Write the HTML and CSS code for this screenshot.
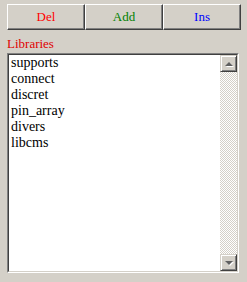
FILE: index.html
```html
<!DOCTYPE html>
<html>
<head>
<meta charset="utf-8">
<link rel="stylesheet" href="styles.css">
</head>
<body>
<div class="panel">
  <div class="buttons">
    <button class="btn del">Del</button>
    <button class="btn add">Add</button>
    <button class="btn ins">Ins</button>
  </div>
  <div class="label">Libraries</div>
  <div class="listbox">
    <ul class="items">
      <li>supports</li>
      <li>connect</li>
      <li>discret</li>
      <li>pin_array</li>
      <li>divers</li>
      <li>libcms</li>
    </ul>
    <div class="scrollbar">
      <div class="sbtn"><span class="arrow up"></span></div>
      <div class="track"></div>
      <div class="sbtn"><span class="arrow down"></span></div>
    </div>
  </div>
</div>
</body>
</html>
```
FILE: styles.css
```css
html, body {
  margin: 0;
  padding: 0;
  background: #d4d0c8;
}
body {
  width: 247px;
  height: 282px;
  overflow: hidden;
  font-family: "Liberation Serif", "Times New Roman", serif;
}
.panel {
  padding: 4px 6px 0 7px;
  display: flex;
  flex-direction: column;
}
.buttons {
  display: flex;
  height: 26px;
}
.btn {
  flex: 1;
  margin: 0;
  padding: 0;
  background: #d4d0c8;
  font-family: "Liberation Serif", "Times New Roman", serif;
  font-size: 13px;
  border-style: solid;
  border-width: 1px;
  border-color: #ffffff #404040 #404040 #ffffff;
  box-shadow: inset -1px -1px 0 #808080;
}
.del { color: #ff0000; }
.add { color: #008000; }
.ins { color: #0000ff; }
.label {
  color: #e00000;
  font-size: 13px;
  line-height: 15px;
  margin-top: 6px;
  height: 17px;
}
.listbox {
  display: flex;
  height: 220px;
  width: 232px;
  box-sizing: border-box;
  border-style: solid;
  border-width: 1px;
  border-color: #808080 #ffffff #ffffff #808080;
  background: #ffffff;
}
.items {
  flex: 1;
  list-style: none;
  margin: 0;
  padding: 0 0 0 2px;
  border-style: solid;
  border-width: 1px 0 1px 1px;
  border-color: #404040 #404040 #d4d0c8 #404040;
  font-size: 14px;
  line-height: 16px;
  color: #000;
}
.scrollbar {
  width: 17px;
  display: flex;
  flex-direction: column;
  border-style: solid;
  border-width: 1px 1px 1px 0;
  border-color: #404040 #d4d0c8 #d4d0c8 #404040;
}
.sbtn {
  height: 17px;
  box-sizing: border-box;
  background: #d4d0c8;
  border-style: solid;
  border-width: 1px;
  border-color: #d4d0c8 #404040 #404040 #d4d0c8;
  box-shadow: inset 1px 1px 0 #ffffff, inset -1px -1px 0 #808080;
  display: flex;
  align-items: center;
  justify-content: center;
}
.track {
  flex: 1;
  background: repeating-conic-gradient(#ffffff 0 25%, #d4d0c8 0 50%) 0 0 / 2px 2px;
}
.arrow {
  width: 0;
  height: 0;
  border-left: 4px solid transparent;
  border-right: 4px solid transparent;
  filter: drop-shadow(1px 1px 0 #ffffff);
}
.arrow.up {
  border-bottom: 4px solid #606060;
}
.arrow.down {
  border-top: 4px solid #606060;
}
```
